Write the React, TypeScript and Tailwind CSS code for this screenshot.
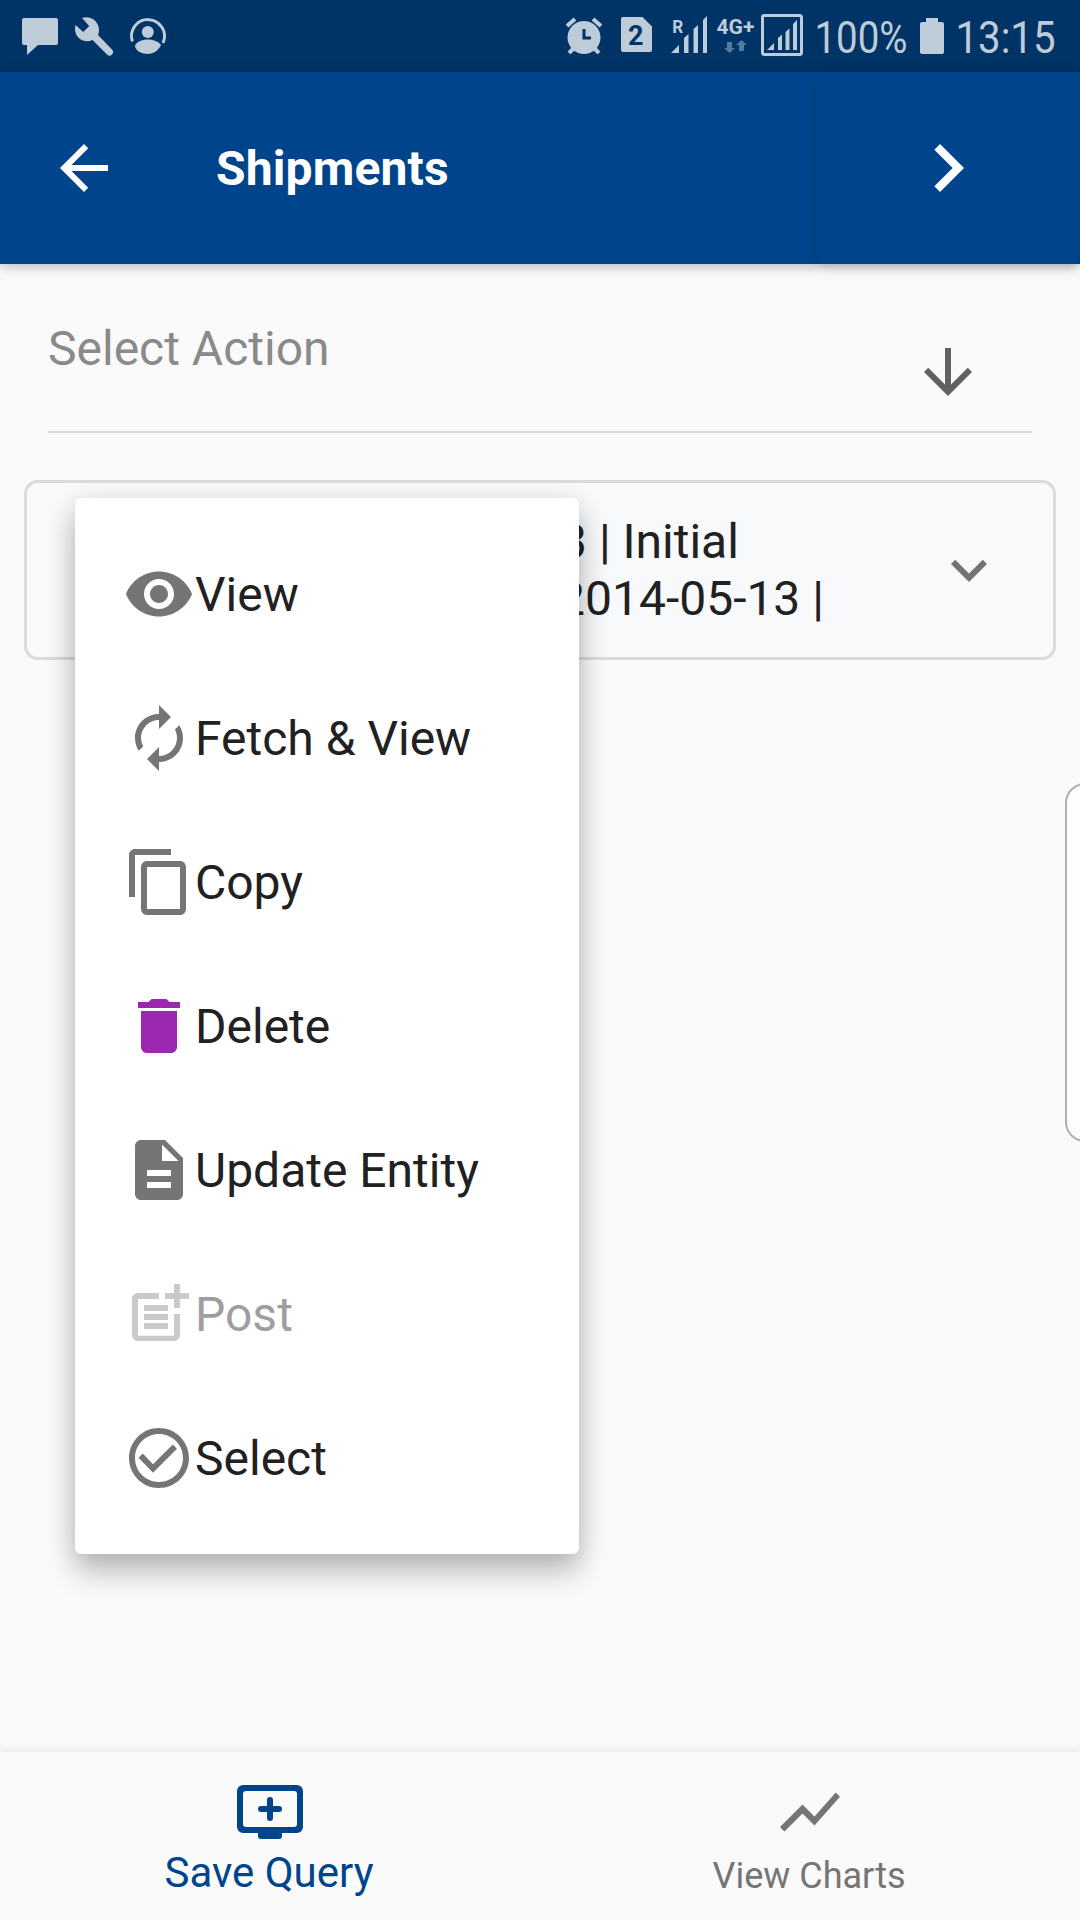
import React from "react";
import {
  MdArrowBack, MdNavigateNext, MdArrowDownward, MdExpandMore, MdRemoveRedEye, MdAutorenew,
  MdContentCopy, MdDelete, MdDescription, MdPostAdd, MdShowChart,
} from "react-icons/md";

function StatusBar() {
  return (
    <div className="flex h-[72px] items-center justify-between bg-[#003366] text-[#becbd9]">
      <svg width="180" height="72" viewBox="0 0 180 72" fill="currentColor">
        <path d="M24 18h32a2 2 0 0 1 2 2v23a2 2 0 0 1-2 2H38L27 55V45h-3a2 2 0 0 1-2-2V20a2 2 0 0 1 2-2z" />
        <path d="M82 18c8-3 17 3 17 12 0 2-.4 3.500-1 5l14 14.500a3.500 3.500 0 0 1-5 5L92.500 40C84 44 75 38 75 29c0-1.500.2-3 .6-4l7.600 7 6-6z" />
        <path d="M132.400 41.500A16.500 16.500 0 1 1 163 43" fill="none" stroke="currentColor" strokeWidth="3" />
        <circle cx="147.800" cy="32" r="6" />
        <path d="M135 46c1-4 7-6.500 12.800-6.500S159.500 42 161 45c-2 5-7.500 9-13.200 9S135.500 51 135 46z" />
      </svg>
      <svg width="540" height="72" viewBox="540 0 540 72" fill="currentColor" fontFamily="Roboto, sans-serif">
        <circle cx="584" cy="37.500" r="16.500" />
        <path d="M567 26l8-7M601 26l-8-7M574 48l-5 5M594 48l5 5" stroke="currentColor" strokeWidth="4" />
        <path d="M584 29v9h7" stroke="#003366" strokeWidth="3" fill="none" />
        <path d="M623 17h19.500L652 26.500V50a2 2 0 0 1-2 2h-27a2 2 0 0 1-2-2V19a2 2 0 0 1 2-2z" />
        <text x="628" y="45" fontSize="27" fontWeight="700" fill="#003366">2</text>
        <text x="672.300" y="32.500" fontSize="18" fontWeight="700" textLength="11" lengthAdjust="spacingAndGlyphs">R</text>
        <path d="M671 53l8-8v8zM684 53V38l4.500-4v19zM693.500 53V29l4.500-4v28zM703 53V20l4-4v37z" />
        <text x="716.500" y="34.300" fontSize="20.500" fontWeight="700" textLength="38" lengthAdjust="spacingAndGlyphs">4G+</text>
        <path d="M727 42h5v6h3l-5.500 5-5.500-5h3zM739 51h5v-6h3l-5.500-5-5.500 5h3z" fill="#5279a0" />
        <rect x="762.500" y="15.500" width="39" height="39" rx="2" fill="none" stroke="currentColor" strokeWidth="3" />
        <path d="M767 50l7-7v7zM778 50V38l4-3.500V50zM785.500 50V32l4-3.500V50zM793 50V24l4-4v30z" />
        <text x="814.500" y="53" fontSize="45" textLength="93" lengthAdjust="spacingAndGlyphs">100%</text>
        <path d="M926 22v-4h12v4h4a2 2 0 0 1 2 2v28a2 2 0 0 1-2 2h-20a2 2 0 0 1-2-2V24a2 2 0 0 1 2-2z" />
        <text x="955.500" y="53" fontSize="45" textLength="100" lengthAdjust="spacingAndGlyphs">13:15</text>
      </svg>
    </div>
  );
}

function CheckCircle() {
  return (
    <svg className="size-[72px]" viewBox="0 0 24 24" fill="currentColor">
      <path d="M12 2C6.480 2 2 6.480 2 12s4.480 10 10 10 10-4.480 10-10S17.520 2 12 2zm0 18c-4.410 0-8-3.590-8-8s3.590-8 8-8 8 3.590 8 8-3.590 8-8 8z" />
      <path d="M6.590 10.580L5.180 12l4.820 5 8-8-1.410-1.410L10 14.170z" transform="translate(0 -0.050)" />
    </svg>
  );
}

function AddToQueue() {
  return (
    <svg className="size-[72px]" viewBox="0 0 24 24" fill="currentColor">
      <path fillRule="evenodd" d="M3 3h18a2 2 0 0 1 2 2v12a2 2 0 0 1-2 2h-5v1a1 1 0 0 1-1 1H9a1 1 0 0 1-1-1v-1H3a2 2 0 0 1-2-2V5a2 2 0 0 1 2-2zm1 2a1 1 0 0 0-1 1v10a1 1 0 0 0 1 1h16a1 1 0 0 0 1-1V6a1 1 0 0 0-1-1z" />
      <path d="M12 8v6M9 11h6" stroke="currentColor" strokeWidth="2" strokeLinecap="round" />
    </svg>
  );
}

const gray = "size-[72px] text-[#757575]";
const items = [
  { label: "View", icon: <MdRemoveRedEye className={gray} /> },
  { label: "Fetch & View", icon: <MdAutorenew className={gray} /> },
  { label: "Copy", icon: <MdContentCopy className={gray} /> },
  { label: "Delete", icon: <MdDelete className="size-[72px] text-[#9c27b0]" /> },
  { label: "Update Entity", icon: <MdDescription className={gray} /> },
  { label: "Post", icon: <MdPostAdd className="size-[72px] text-[#cacaca]" />, disabled: true },
  { label: "Select", icon: <span className="text-[#757575]"><CheckCircle /></span> },
];

export default function App() {
  return (
    <div className="relative flex h-[1920px] w-[1080px] flex-col overflow-hidden bg-[#fafafa] font-[Roboto,sans-serif] text-[48px] leading-[57px] text-[#212121]">
      <StatusBar />
      <header className="z-10 flex h-[192px] shrink-0 items-center bg-[#00458b] text-white shadow-[0_3px_12px_rgba(0,0,0,0.25)]">
        <MdArrowBack className="ml-12 size-[72px]" />
        <h1 className="ml-24 flex-1 font-bold tracking-[0.15px]">Shipments</h1>
        <button className="flex h-full w-[264px] items-center justify-center rounded-[12px] bg-[#00458b] shadow-[0_3px_9px_rgba(0,0,0,0.12)]">
          <MdNavigateNext className="size-24" />
        </button>
      </header>

      <div className="mx-12 flex h-[169px] shrink-0 justify-between border-b-2 border-[#d9dbde]">
        <span className="mt-14 text-[#8a8a8a]">Select Action</span>
        <MdArrowDownward className="mt-[72px] mr-12 size-[72px] text-[#616161]" />
      </div>

      <section className="mx-6 mt-[47px] flex h-[180px] shrink-0 items-center justify-between rounded-[14px] border-[3px] border-[#dadbdc] bg-[#f8f9fb]">
        <div className="ml-[530px] flex flex-col whitespace-pre">
          <span className="pl-[3px]">3 | Initial</span>
          <span className="pl-px">2014-05-13 |</span>
        </div>
        <MdExpandMore className="mr-12 size-[72px] text-[#727374]" />
      </section>

      <nav className="mt-auto flex h-[168px] shrink-0 bg-[#fafafa] shadow-[0_-1px_9px_rgba(0,0,0,0.09)]">
        <div className="flex flex-1 flex-col items-center pt-6 text-[42px] leading-[50px] text-[#00458b]">
          <AddToQueue />
          <span className="pr-0.5">Save Query</span>
        </div>
        <div className="flex flex-1 flex-col items-center pt-6 text-[36px] leading-[56px] text-[#757575]">
          <MdShowChart className="size-[72px]" />
          <span className="pr-0.5">View Charts</span>
        </div>
      </nav>

      <div className="absolute top-[783px] left-[1065px] h-[359px] w-10 rounded-l-[20px] border-2 border-[#b0b0b0] bg-[#fdfdfd]" />

      <ul className="absolute top-[498px] left-[75px] z-20 flex h-[1056px] w-[504px] flex-col rounded-[6px] bg-white py-6 shadow-[0_18px_30px_rgba(0,0,0,0.24),0_3px_27px_rgba(0,0,0,0.1)]">
        {items.map((it) => (
          <li key={it.label} className={it.disabled ? "flex h-36 items-center pl-12 text-[#9e9e9e]" : "flex h-36 items-center pl-12"}>
            {it.icon}
            <span>{it.label}</span>
          </li>
        ))}
      </ul>
    </div>
  );
}
